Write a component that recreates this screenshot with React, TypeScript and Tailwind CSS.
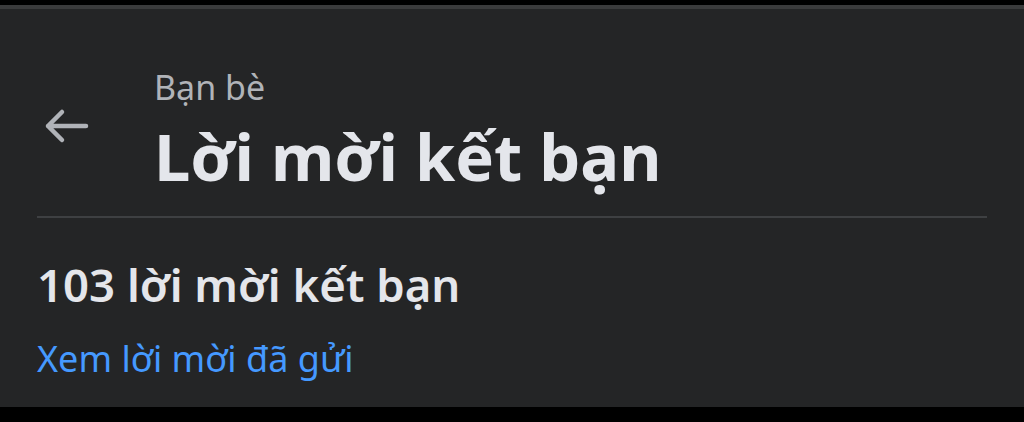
function BackArrow() {
  return (
    <svg width="48" height="36" viewBox="0 0 48 36" fill="none" aria-hidden="true">
      <path
        d="M44 18H6M20 4L6 18l14 14"
        stroke="#b0b3b8"
        strokeWidth="4.5"
        strokeLinecap="round"
        strokeLinejoin="round"
      />
    </svg>
  );
}

export default function App() {
  return (
    <div
      className="flex h-[422px] w-[1024px] flex-col bg-black"
      style={{ fontFamily: '"Noto Sans", "Open Sans", sans-serif' }}
    >
      <div className="mt-[5px] flex flex-1 flex-col border-t-[4px] border-[#3a3b3c] bg-[#242526]">
        <div className="flex items-start pl-[42px] pt-[61px]">
          <div className="mt-[38px]">
            <BackArrow />
          </div>
          <div className="ml-[64px] flex flex-col">
            <span className="text-[34px] leading-[34px] text-[#b0b3b8]">Bạn bè</span>
            <h1 className="mt-[20px] text-[65px] font-bold leading-[65px] text-[#e4e6eb]">Lời mời kết bạn</h1>
          </div>
        </div>
        <div className="mx-[37px] mt-[27px] h-[2px] bg-[#3e4042]" />
        <div className="px-[37px] pt-[43px]">
          <h2 className="text-[45.5px] font-semibold leading-[46px] text-[#e4e6eb]">103 lời mời kết bạn</h2>
          <a className="mt-[34px] block text-[36px] leading-[36px] text-[#4599ff]">Xem lời mời đã gửi</a>
        </div>
      </div>
      <div className="h-[15px] bg-black" />
    </div>
  );
}
